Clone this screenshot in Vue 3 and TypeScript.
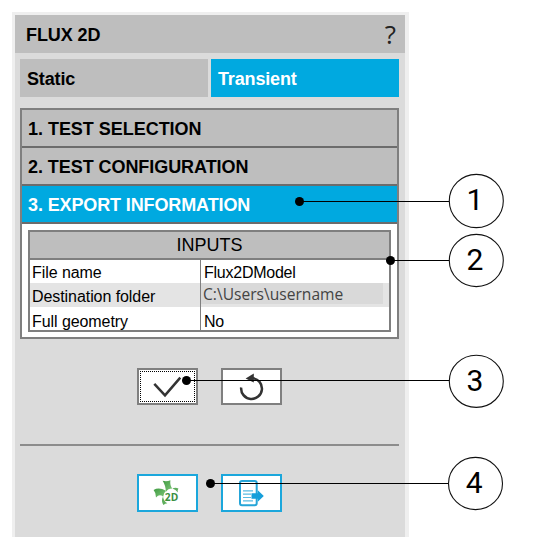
<script setup lang="ts">
interface Callout {
  id: number
  cx: number
  cy: number
  ry: number
  lineY: number
  dotX: number
}

const tabs = [
  { label: 'Static', active: false },
  { label: 'Transient', active: true },
]

const sections = [
  { label: '1. TEST SELECTION', cls: 's1' },
  { label: '2. TEST CONFIGURATION', cls: 's2' },
  { label: '3. EXPORT INFORMATION', cls: 's3 active' },
]

const inputs = [
  { name: 'File name', value: 'Flux2DModel', path: false },
  { name: 'Destination folder', value: 'C:\\Users\\username', path: true },
  { name: 'Full geometry', value: 'No', path: false },
]

const callouts: Callout[] = [
  { id: 1, cx: 476.3, cy: 201, ry: 26.6, lineY: 201.5, dotX: 299.5 },
  { id: 2, cx: 476.3, cy: 260.5, ry: 26.1, lineY: 260.5, dotX: 390.5 },
  { id: 3, cx: 476.3, cy: 381.3, ry: 26.1, lineY: 380.5, dotX: 186.5 },
  { id: 4, cx: 475.5, cy: 483.5, ry: 26.1, lineY: 483.5, dotX: 210.5 },
]
</script>

<template>
  <main class="page">
    <section class="panel">
      <header class="title">
        <span class="title-text">FLUX 2D</span>
        <span class="help">?</span>
      </header>

      <div class="body">
        <nav class="tabs">
          <div v-for="t in tabs" :key="t.label" class="tab" :class="{ active: t.active }">
            <span>{{ t.label }}</span>
          </div>
        </nav>

        <div class="accordion">
          <div v-for="s in sections" :key="s.label" class="section" :class="s.cls">
            <span>{{ s.label }}</span>
          </div>
          <div class="content">
            <div class="table">
              <div class="thead"><span>INPUTS</span></div>
              <div v-for="r in inputs" :key="r.name" class="row">
                <div class="name">{{ r.name }}</div>
                <div class="value" :class="{ path: r.path }"><span>{{ r.value }}</span></div>
              </div>
            </div>
          </div>
        </div>

        <div class="buttons main-actions">
          <button class="btn focused">
            <svg width="57" height="33" viewBox="0 0 57 33">
              <path d="M15.3 13.8 L26 25.3 L41.3 7.6" fill="none" stroke="#333" stroke-width="2.5" />
            </svg>
          </button>
          <button class="btn">
            <svg width="57" height="33" viewBox="0 0 57 33">
              <path d="M18.2 17.5 A10.4 10.4 0 1 0 29.5 8.2" fill="none" stroke="#333" stroke-width="2.5" />
              <path d="M22.6 8.6 L30.8 3.6 V12.6 Z" fill="#333" />
            </svg>
          </button>
        </div>

        <div class="divider"></div>

        <div class="buttons export-actions">
          <button class="btn blue">
            <svg width="57" height="34" viewBox="0 0 57 34">
              <defs>
                <linearGradient id="leaf" x1="0" y1="0" x2="1" y2="1">
                  <stop offset="0" stop-color="#3f9b42" />
                  <stop offset="1" stop-color="#82c77b" />
                </linearGradient>
              </defs>
              <path d="M23.6 4.8 Q27.8 5.8 31.4 4.3 Q30.8 9.5 33.2 12.6 Q29 12.6 26.8 16 Q26.8 9.5 23.6 4.8Z" fill="url(#leaf)" />
              <path d="M14.6 14 Q20 10.8 27 14.8 Q24.4 17 24.2 20.8 Q20.5 17.5 17 21.5 Q17.2 17 14.6 14Z" fill="url(#leaf)" />
              <path d="M24 20.6 Q24.8 25.6 28.4 27.3 Q26.2 27.3 24.4 29 Q21.8 25.2 24 20.6Z" fill="#5fae5d" />
              <path d="M33.4 12.4 Q36.5 11.2 39.4 12.4 Q38.2 14.2 38.8 16.4 Q36.8 13.4 33.4 12.4Z" fill="#5fae5d" />
              <text x="25.8" y="25" class="icon-text" textLength="13.4" lengthAdjust="spacingAndGlyphs">2D</text>
            </svg>
          </button>
          <button class="btn blue">
            <svg width="57" height="34" viewBox="0 0 57 34">
              <rect x="17" y="5" width="16.7" height="24.2" rx="2" fill="#fff" stroke="#25a5d8" stroke-width="2" />
              <path d="M20 14.9 H30 M20 18.2 H28 M20 21.5 H28 M20 24.8 H30" stroke="#58bbe2" stroke-width="1.2" />
              <path d="M28.5 17.3 H34.8 V14.3 L40.8 20 L34.8 25.7 V22.8 H28.5Z" fill="#169fda" />
            </svg>
          </button>
        </div>
      </div>
    </section>

    <svg class="callouts" width="540" height="556" viewBox="0 0 540 556">
      <g v-for="c in callouts" :key="c.id">
        <line :x1="c.dotX" :y1="c.lineY" :x2="c.cx - 27" :y2="c.lineY" stroke="#000" stroke-width="1.1" />
        <circle :cx="c.dotX" :cy="c.lineY" r="4.5" fill="#000" />
        <ellipse :cx="c.cx" :cy="c.cy" rx="27" :ry="c.ry" fill="#fff" stroke="#111" stroke-width="1.1" />
        <text :x="c.cx - 1.3" :y="c.cy + 9.3" class="num">{{ c.id }}</text>
      </g>
    </svg>
  </main>
</template>

<style>
body {
  margin: 0;
  background: #fff;
}
</style>

<style scoped>
.page {
  position: relative;
  box-sizing: border-box;
  width: 540px;
  height: 556px;
  padding: 12px 0 0 12px;
  overflow: hidden;
  background: #fff;
  font-family: 'Liberation Sans', Arial, sans-serif;
  color: #000;
}
.panel {
  box-sizing: border-box;
  width: 397px;
  height: 525px;
  border: solid #efefef;
  border-width: 3px 4px 0 3px;
  background: #dbdbdb;
}
.title {
  display: flex;
  align-items: center;
  justify-content: space-between;
  box-sizing: border-box;
  height: 38px;
  padding: 3px 9px 0 11px;
  background: #bebebe;
}
.title-text {
  font-size: 18px;
  font-weight: bold;
  letter-spacing: -0.1px;
}
.help {
  margin-top: -4px;
  font-family: 'Open Sans', sans-serif;
  font-size: 26px;
  line-height: 30px;
  color: #222;
}
.body {
  padding: 6px 6px 0 5px;
}
.tabs {
  display: grid;
  grid-template-columns: 188px 188px;
  gap: 3px;
  height: 38px;
}
.tab {
  display: flex;
  align-items: center;
  box-sizing: border-box;
  padding: 3px 7px 0;
  background: #bebebe;
  font-size: 18px;
  font-weight: bold;
  letter-spacing: -0.15px;
}
.tab.active {
  background: #00a9e0;
  color: #fff;
}
.accordion {
  box-sizing: border-box;
  height: 231px;
  margin-top: 11px;
  border: 2px solid #7f7f7f;
  background: #fff;
}
.section {
  display: flex;
  align-items: center;
  box-sizing: border-box;
  height: 38px;
  padding: 2px 6px 0;
  border-bottom: 2px solid #6c6c6c;
  background: #bebebe;
  font-size: 18px;
  font-weight: bold;
  white-space: nowrap;
}
.s1 {
  letter-spacing: -0.03px;
}
.s2 {
  letter-spacing: -0.06px;
}
.s3 {
  letter-spacing: -0.12px;
}
.section.active {
  background: #00a9e0;
  color: #fff;
}
.content {
  padding: 6px;
}
.table {
  box-sizing: border-box;
  height: 102px;
  border: 2px solid #7f7f7f;
}
.thead {
  box-sizing: border-box;
  height: 28px;
  border-bottom: 2px solid #7f7f7f;
  background: #bebebe;
  font-size: 18px;
  line-height: 26px;
  text-align: center;
}
.row {
  display: grid;
  grid-template-columns: 170px 1fr;
  grid-template-rows: 100%;
  height: 23px;
  font-size: 16px;
  line-height: 25px;
  white-space: nowrap;
}
.row:nth-child(3) {
  height: 24px;
}
.row:nth-child(3) .name {
  line-height: 27px;
}
.row:nth-child(4) {
  line-height: 29px;
}
.row:nth-child(odd) {
  background: #e4e4e4;
}
.name {
  padding-left: 2px;
  letter-spacing: -0.07px;
}
.value {
  border-left: 1px solid #7f7f7f;
  padding-left: 3px;
  letter-spacing: -0.25px;
}
.value.path {
  padding-left: 0;
  letter-spacing: 0;
}
.path span {
  display: block;
  box-sizing: border-box;
  width: 182px;
  height: 21px;
  padding-left: 2px;
  background: #d9d9d9;
  color: #444;
  font-family: 'Open Sans', sans-serif;
  font-size: 15.6px;
  line-height: 22px;
}
.buttons {
  display: flex;
  gap: 23px;
  padding-left: 117px;
}
.main-actions {
  margin-top: 29px;
}
.export-actions {
  margin-top: 28px;
}
.btn {
  display: flex;
  position: relative;
  box-sizing: border-box;
  width: 61px;
  height: 37px;
  padding: 0;
  border: 2px solid #7f7f7f;
  background: #fff;
}
.btn.focused::after {
  content: '';
  position: absolute;
  inset: 1px;
  border: 1px dotted #000;
}
.btn.blue {
  height: 38px;
  border-color: #1ba7dc;
}
.divider {
  height: 2px;
  margin-top: 39px;
  background: #8c8c8c;
}
.icon-text {
  font: bold 10px 'Open Sans', sans-serif;
  fill: #3b8f3f;
}
.callouts {
  position: absolute;
  top: 0;
  left: 0;
}
.num {
  font-family: Roboto, sans-serif;
  font-size: 30px;
  text-anchor: middle;
}
</style>
